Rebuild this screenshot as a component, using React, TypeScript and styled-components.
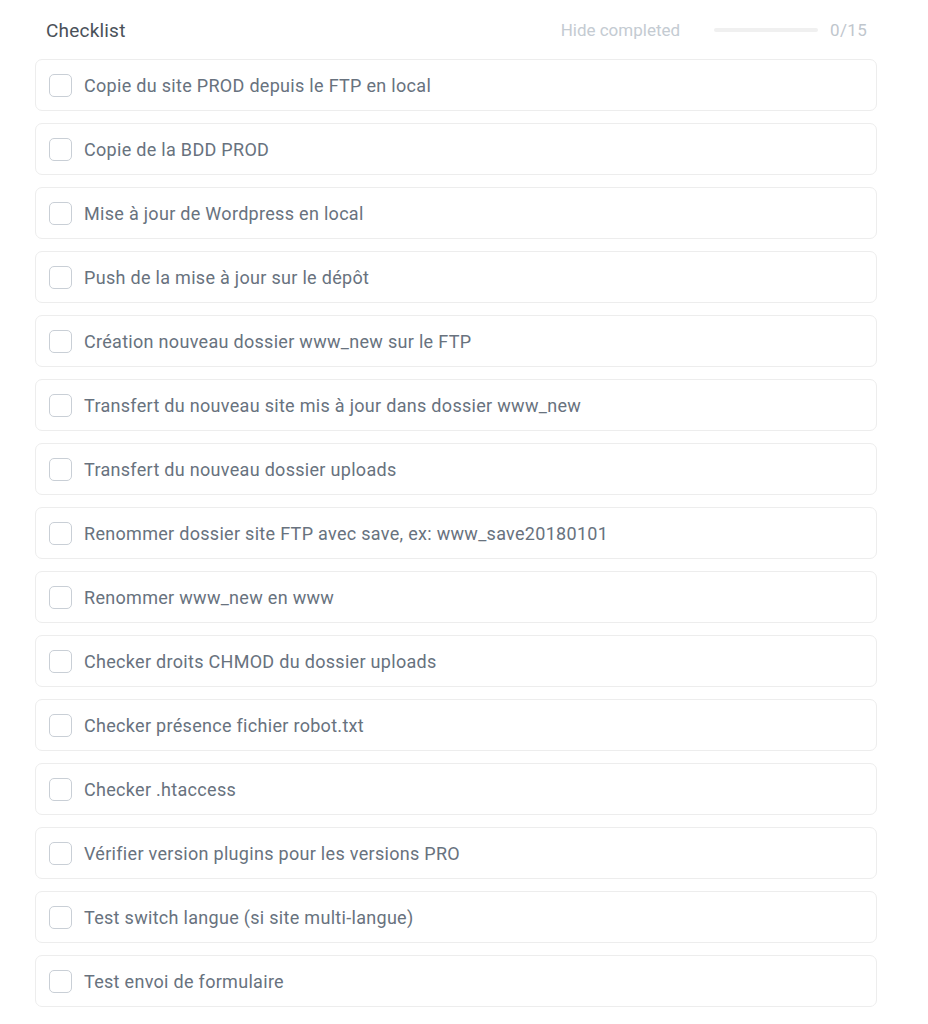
import styled, { createGlobalStyle } from "styled-components";

const items = [
  "Copie du site PROD depuis le FTP en local",
  "Copie de la BDD PROD",
  "Mise à jour de Wordpress en local",
  "Push de la mise à jour sur le dépôt",
  "Création nouveau dossier www_new sur le FTP",
  "Transfert du nouveau site mis à jour dans dossier www_new",
  "Transfert du nouveau dossier uploads",
  "Renommer dossier site FTP avec save, ex: www_save20180101",
  "Renommer www_new en www",
  "Checker droits CHMOD du dossier uploads",
  "Checker présence fichier robot.txt",
  "Checker .htaccess",
  "Vérifier version plugins pour les versions PRO",
  "Test switch langue (si site multi-langue)",
  "Test envoi de formulaire",
];

export default function App() {
  const done = 0;
  return (
    <>
      <GlobalStyle />
      <Wrapper>
        <Header>
          <Title>Checklist</Title>
          <HideLink>Hide completed</HideLink>
          <Progress>
            <ProgressFill style={{ width: `${(done / items.length) * 100}%` }} />
          </Progress>
          <Count>
            {done}/{items.length}
          </Count>
        </Header>
        <List>
          {items.map((text) => (
            <Item key={text}>
              <Box />
              <Label>{text}</Label>
            </Item>
          ))}
        </List>
      </Wrapper>
    </>
  );
}

const GlobalStyle = createGlobalStyle`
  body {
    margin: 0;
    background: #fff;
    font-family: Roboto, "Liberation Sans", sans-serif;
  }
`;

const Wrapper = styled.div`
  width: 842px;
  padding: 18px 0 0 35px;
`;

const Header = styled.div`
  display: flex;
  align-items: center;
  height: 24px;
  padding: 0 10px 0 11px;
  margin-bottom: 17px;
`;

const Title = styled.div`
  flex: 1;
  font-size: 19px;
  letter-spacing: 0.2px;
  color: #4a5159;
`;

const HideLink = styled.span`
  font-size: 17px;
  color: #c4cbd2;
  cursor: pointer;
`;

const Progress = styled.div`
  width: 104px;
  height: 4px;
  border-radius: 2px;
  background: #f0f0f0;
  margin: 0 12px 0 34px;
  overflow: hidden;
`;

const ProgressFill = styled.div`
  height: 100%;
  background: #4caf50;
`;

const Count = styled.span`
  font-size: 17px;
  letter-spacing: 0.3px;
  color: #c0c6cd;
`;

const List = styled.div`
  display: flex;
  flex-direction: column;
  gap: 12px;
`;

const Item = styled.div`
  display: flex;
  align-items: center;
  height: 50px;
  border: 1px solid #ededed;
  border-radius: 7px;
  padding: 0 13px;
`;

const Box = styled.div`
  width: 21px;
  height: 21px;
  border: 1.5px solid #c9cfd6;
  border-radius: 5px;
  flex-shrink: 0;
`;

const Label = styled.span`
  margin-left: 12px;
  font-size: 18px;
  letter-spacing: 0.3px;
  color: #68727e;
`;
